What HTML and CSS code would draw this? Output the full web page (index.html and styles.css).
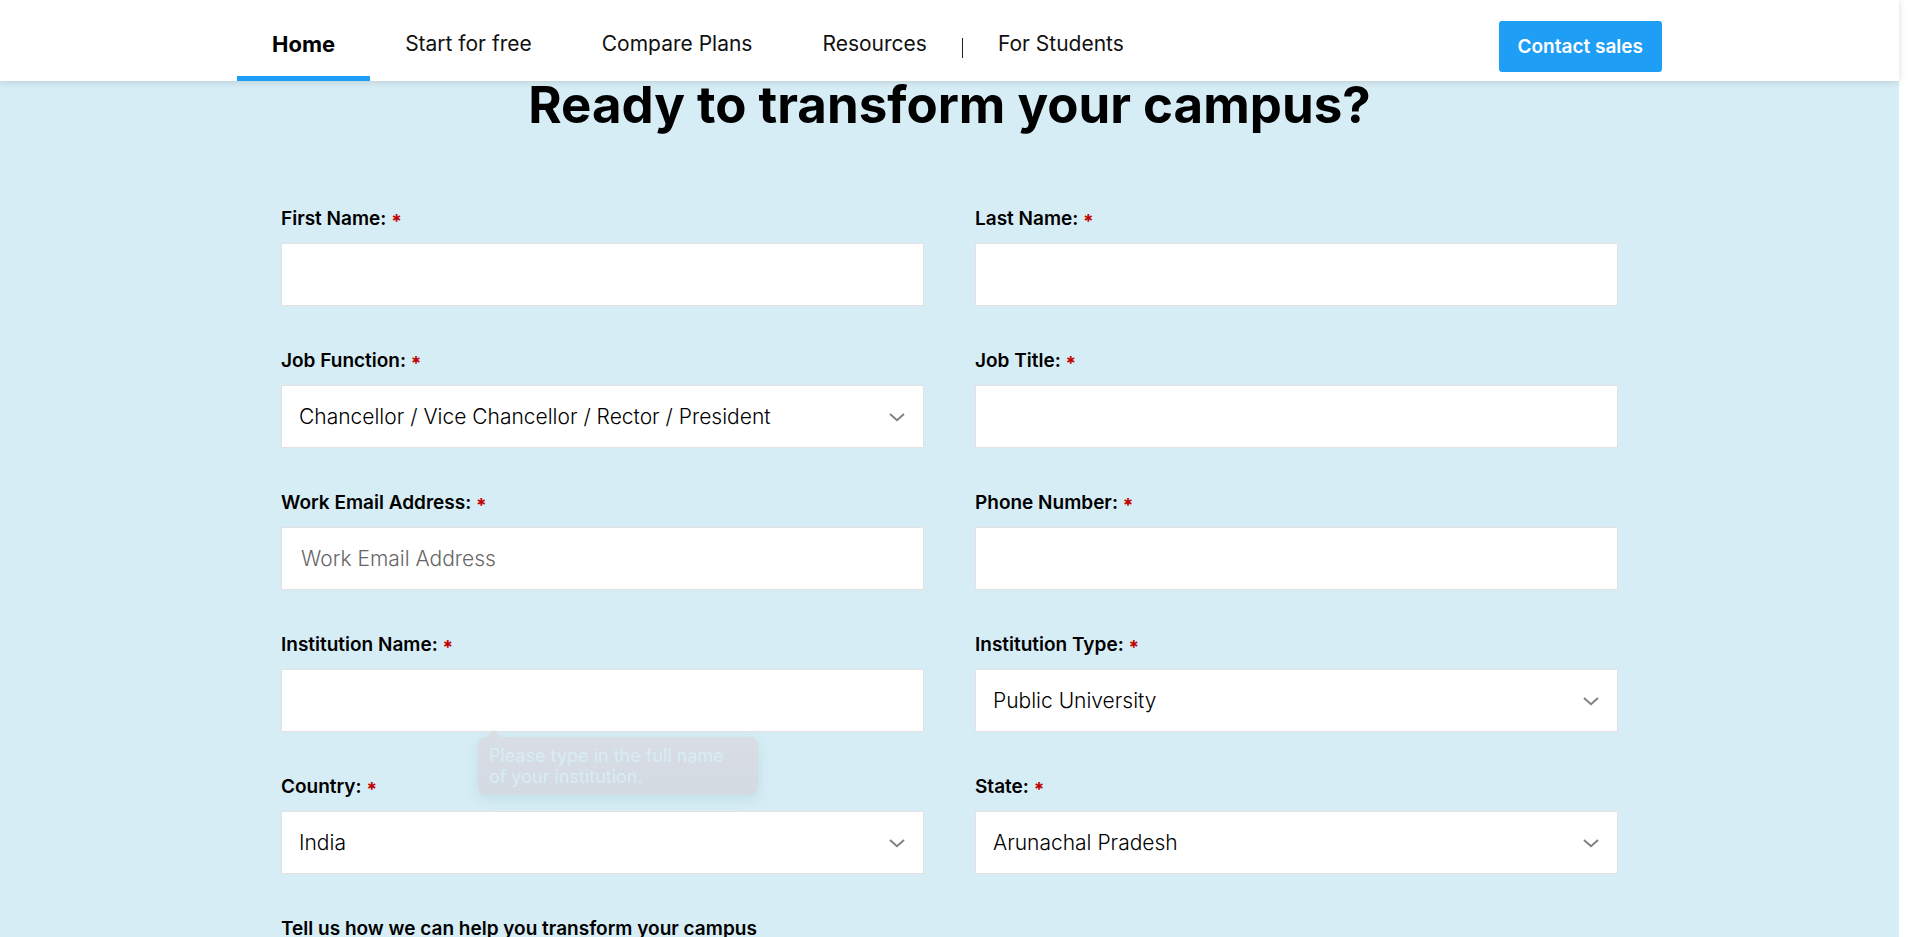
FILE: index.html
```html
<!DOCTYPE html>
<html lang="en">
<head>
<meta charset="utf-8">
<title>Ready to transform your campus?</title>
<link rel="stylesheet" href="styles.css">
</head>
<body>
<div class="page">
  <header class="header">
    <div class="header-inner">
      <nav class="nav">
        <a class="nav-link active" href="#">Home</a>
        <a class="nav-link" href="#">Start for free</a>
        <a class="nav-link" href="#">Compare Plans</a>
        <a class="nav-link" href="#">Resources</a>
        <span class="nav-divider"></span>
        <a class="nav-link" href="#">For Students</a>
      </nav>
      <button class="contact" type="button">Contact sales</button>
    </div>
  </header>
  <main class="main">
    <h1 class="title">Ready to transform your campus?</h1>
    <form class="form">
      <div class="field">
        <label class="label" for="first">First Name: <span class="req">*</span></label>
        <input class="control" id="first" type="text">
      </div>
      <div class="field">
        <label class="label" for="last">Last Name: <span class="req">*</span></label>
        <input class="control" id="last" type="text">
      </div>
      <div class="field">
        <label class="label" for="function">Job Function: <span class="req">*</span></label>
        <div class="select-wrap">
          <select class="control select" id="function"><option>Chancellor / Vice Chancellor / Rector / President</option></select>
          <svg class="chevron" viewBox="0 0 16 9"><path d="M1 1 L8 7.2 L15 1"/></svg>
        </div>
      </div>
      <div class="field">
        <label class="label" for="title">Job Title: <span class="req">*</span></label>
        <input class="control" id="title" type="text">
      </div>
      <div class="field">
        <label class="label" for="email">Work Email Address: <span class="req">*</span></label>
        <input class="control" id="email" type="email" placeholder="Work Email Address">
      </div>
      <div class="field">
        <label class="label" for="phone">Phone Number: <span class="req">*</span></label>
        <input class="control" id="phone" type="tel">
      </div>
      <div class="field">
        <label class="label" for="institution">Institution Name: <span class="req">*</span></label>
        <input class="control" id="institution" type="text" aria-describedby="institution-tip">
        <div class="tooltip" id="institution-tip" role="tooltip">Please type in the full name of your institution.</div>
      </div>
      <div class="field">
        <label class="label" for="type">Institution Type: <span class="req">*</span></label>
        <div class="select-wrap">
          <select class="control select" id="type"><option>Public University</option></select>
          <svg class="chevron" viewBox="0 0 16 9"><path d="M1 1 L8 7.2 L15 1"/></svg>
        </div>
      </div>
      <div class="field">
        <label class="label" for="country">Country: <span class="req">*</span></label>
        <div class="select-wrap">
          <select class="control select" id="country"><option>India</option></select>
          <svg class="chevron" viewBox="0 0 16 9"><path d="M1 1 L8 7.2 L15 1"/></svg>
        </div>
      </div>
      <div class="field">
        <label class="label" for="state">State: <span class="req">*</span></label>
        <div class="select-wrap">
          <select class="control select" id="state"><option>Arunachal Pradesh</option></select>
          <svg class="chevron" viewBox="0 0 16 9"><path d="M1 1 L8 7.2 L15 1"/></svg>
        </div>
      </div>
      <div class="field wide">
        <label class="label" for="help">Tell us how we can help you transform your campus</label>
        <textarea class="control area" id="help"></textarea>
      </div>
    </form>
  </main>
</div>
</body>
</html>
```
FILE: styles.css
```css
* {
  box-sizing: border-box;
}

body {
  margin: 0;
  background: #fff;
  color: #000;
  font-family: Inter, "Liberation Sans", sans-serif;
}

.page {
  height: 100vh;
  padding-right: 21px;
  overflow: hidden;
}

.header {
  position: relative;
  z-index: 2;
  background: #fff;
  box-shadow: 0 1px 7px rgba(0, 0, 0, 0.14);
}

.header-inner {
  display: flex;
  align-items: center;
  justify-content: space-between;
  max-width: 1425px;
  margin: 0 auto;
}

.nav {
  display: flex;
}

.nav-link {
  padding: 32px 35px 20px;
  border-bottom: 5px solid transparent;
  color: #111;
  font-size: 21px;
  font-weight: 400;
  line-height: 24px;
  text-decoration: none;
  white-space: nowrap;
}

.nav-link.active {
  border-bottom-color: #1f9ef6;
  color: #000;
  font-size: 22px;
  font-weight: 700;
}

.nav-divider {
  width: 1px;
  height: 20px;
  margin-top: 38px;
  background: #222;
}

.contact {
  margin-top: 12px;
  padding: 14px 19px 13px;
  border: 0;
  border-radius: 3px;
  background: #1f9ef6;
  color: #fff;
  font-family: inherit;
  font-size: 19px;
  font-weight: 600;
  line-height: 24px;
}

.main {
  min-height: 100vh;
  background: #d7edf5;
}

.title {
  margin: 0;
  font-size: 51px;
  font-weight: 700;
  line-height: 48px;
  text-align: center;
}

.form {
  display: grid;
  grid-template-columns: 1fr 1fr;
  gap: 44px 51px;
  max-width: 1425px;
  margin: 0 auto;
  padding: 79px 44px;
}

.field {
  position: relative;
  display: flex;
  flex-direction: column;
  gap: 13px;
}

.field.wide {
  grid-column: span 2;
}

.label {
  font-size: 19px;
  font-weight: 600;
  line-height: 22px;
}

.req {
  display: inline-block;
  height: 22px;
  margin-bottom: -3px;
  color: #c00000;
  font-weight: 700;
  line-height: 22px;
  vertical-align: -3px;
}

.control {
  display: block;
  width: 100%;
  height: 63px;
  padding: 0 19px;
  border: 1px solid #e3e1e3;
  border-radius: 0;
  background: #fff;
  color: #000;
  font-family: inherit;
  font-size: 21px;
  font-weight: 300;
}

.control::placeholder {
  color: #666;
}

.select-wrap {
  position: relative;
}

.select {
  padding: 0 17px;
  appearance: none;
}

.chevron {
  position: absolute;
  top: 28px;
  right: 19px;
  width: 16px;
  height: 9px;
  fill: none;
  stroke: #808080;
  stroke-width: 2;
  pointer-events: none;
}

.area {
  height: 160px;
}

.tooltip {
  position: absolute;
  top: 103px;
  left: 197px;
  width: 280px;
  padding: 8px 24px 8px 11px;
  border-radius: 8px;
  background: linear-gradient(#d9dde4, #d3dae2);
  box-shadow: 0 4px 14px rgba(80, 150, 170, 0.16);
  color: #d7edf6;
  font-size: 18px;
  line-height: 21px;
}

.tooltip::before {
  content: "";
  position: absolute;
  top: -7px;
  left: 9px;
  border: 7px solid transparent;
  border-top: 0;
  border-bottom-color: #dbdbe2;
}
```
